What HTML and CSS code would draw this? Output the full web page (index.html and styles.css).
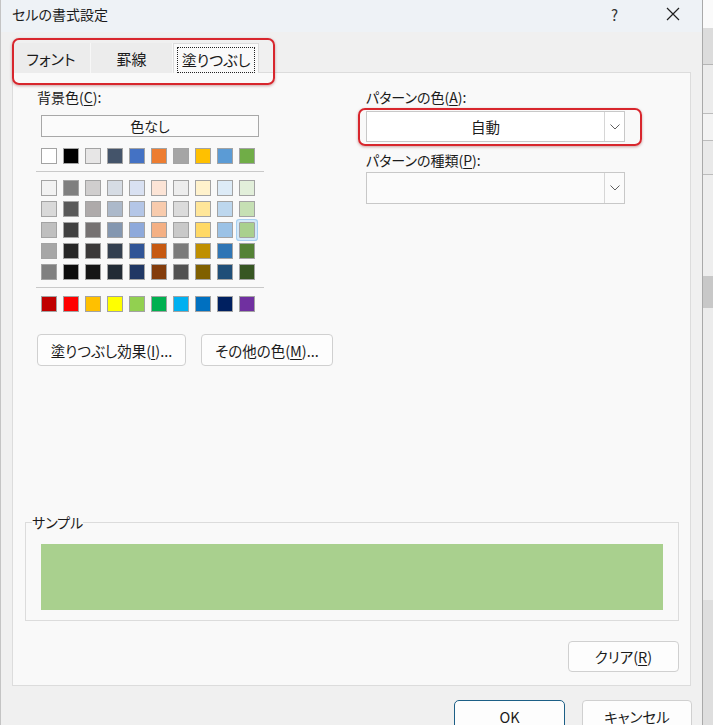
FILE: index.html
```html
<!DOCTYPE html>
<html lang="ja">
<head>
    <meta charset="UTF-8">
    <title>セルの書式設定</title>
    <link rel="stylesheet" href="styles.css">
</head>
<body>
    <div class="screen">
        <div class="dialog">
            <div class="titlebar">
                <span class="title">セルの書式設定</span>
                <span class="help">?</span>
                <span class="close">
                    <svg width="14" height="14" viewBox="0 0 14 14"><path d="M1 1 L13 13 M13 1 L1 13" stroke="#1f1f1f" stroke-width="1.2" fill="none"/></svg>
                </span>
            </div>

            <div class="tabs">
                <div class="tab">フォント</div>
                <div class="tab">罫線</div>
                <div class="tab active"><span class="focus">塗りつぶし</span></div>
                <span class="mark mark-tabs"></span>
            </div>

            <div class="panel">
                <div class="columns">
                    <div class="col-left">
                        <div class="label">背景色(<u>C</u>):</div>
                        <div class="palette">
                            <div class="no-color">色なし</div>

                            <div class="swatches theme">
                                <span class="swatch" style="background:#ffffff"></span>
                                <span class="swatch" style="background:#000000"></span>
                                <span class="swatch" style="background:#e7e6e6"></span>
                                <span class="swatch" style="background:#44546a"></span>
                                <span class="swatch" style="background:#4472c4"></span>
                                <span class="swatch" style="background:#ed7d31"></span>
                                <span class="swatch" style="background:#a5a5a5"></span>
                                <span class="swatch" style="background:#ffc000"></span>
                                <span class="swatch" style="background:#5b9bd5"></span>
                                <span class="swatch" style="background:#70ad47"></span>
                            </div>

                            <div class="divider"></div>

                            <div class="swatches shades">
                                <span class="swatch" style="background:#f2f2f2"></span>
                                <span class="swatch" style="background:#7f7f7f"></span>
                                <span class="swatch" style="background:#d0cece"></span>
                                <span class="swatch" style="background:#d6dce4"></span>
                                <span class="swatch" style="background:#d9e1f2"></span>
                                <span class="swatch" style="background:#fce4d6"></span>
                                <span class="swatch" style="background:#ededed"></span>
                                <span class="swatch" style="background:#fff2cc"></span>
                                <span class="swatch" style="background:#ddebf7"></span>
                                <span class="swatch" style="background:#e2efda"></span>

                                <span class="swatch" style="background:#d9d9d9"></span>
                                <span class="swatch" style="background:#595959"></span>
                                <span class="swatch" style="background:#aeaaaa"></span>
                                <span class="swatch" style="background:#acb9ca"></span>
                                <span class="swatch" style="background:#b4c6e7"></span>
                                <span class="swatch" style="background:#f8cbad"></span>
                                <span class="swatch" style="background:#dbdbdb"></span>
                                <span class="swatch" style="background:#ffe699"></span>
                                <span class="swatch" style="background:#bdd7ee"></span>
                                <span class="swatch" style="background:#c6e0b4"></span>

                                <span class="swatch" style="background:#bfbfbf"></span>
                                <span class="swatch" style="background:#404040"></span>
                                <span class="swatch" style="background:#757171"></span>
                                <span class="swatch" style="background:#8497b0"></span>
                                <span class="swatch" style="background:#8ea9db"></span>
                                <span class="swatch" style="background:#f4b084"></span>
                                <span class="swatch" style="background:#c9c9c9"></span>
                                <span class="swatch" style="background:#ffd966"></span>
                                <span class="swatch" style="background:#9bc2e6"></span>
                                <span class="swatch selected" style="background:#a9d08e"></span>

                                <span class="swatch" style="background:#a6a6a6"></span>
                                <span class="swatch" style="background:#262626"></span>
                                <span class="swatch" style="background:#3a3838"></span>
                                <span class="swatch" style="background:#333f4f"></span>
                                <span class="swatch" style="background:#305496"></span>
                                <span class="swatch" style="background:#c65911"></span>
                                <span class="swatch" style="background:#7b7b7b"></span>
                                <span class="swatch" style="background:#bf8f00"></span>
                                <span class="swatch" style="background:#2f75b5"></span>
                                <span class="swatch" style="background:#548235"></span>

                                <span class="swatch" style="background:#808080"></span>
                                <span class="swatch" style="background:#0d0d0d"></span>
                                <span class="swatch" style="background:#161616"></span>
                                <span class="swatch" style="background:#222b35"></span>
                                <span class="swatch" style="background:#203764"></span>
                                <span class="swatch" style="background:#833c0c"></span>
                                <span class="swatch" style="background:#525252"></span>
                                <span class="swatch" style="background:#806000"></span>
                                <span class="swatch" style="background:#1f4e78"></span>
                                <span class="swatch" style="background:#375623"></span>
                            </div>

                            <div class="divider"></div>

                            <div class="swatches standard">
                                <span class="swatch" style="background:#c00000"></span>
                                <span class="swatch" style="background:#ff0000"></span>
                                <span class="swatch" style="background:#ffc000"></span>
                                <span class="swatch" style="background:#ffff00"></span>
                                <span class="swatch" style="background:#92d050"></span>
                                <span class="swatch" style="background:#00b050"></span>
                                <span class="swatch" style="background:#00b0f0"></span>
                                <span class="swatch" style="background:#0070c0"></span>
                                <span class="swatch" style="background:#002060"></span>
                                <span class="swatch" style="background:#7030a0"></span>
                            </div>
                        </div>

                        <div class="effect-buttons">
                            <button class="btn btn-effect">塗りつぶし効果(<u>I</u>)...</button>
                            <button class="btn btn-more">その他の色(<u>M</u>)...</button>
                        </div>
                    </div>

                    <div class="col-right">
                        <div class="label">パターンの色(<u>A</u>):</div>
                        <div class="combo-wrap">
                            <div class="combo combo-white">
                                <span class="combo-value">自動</span>
                                <span class="combo-arrow">
                                    <svg width="10" height="6" viewBox="0 0 10 6"><path d="M0.5 0.5 L5 5 L9.5 0.5" stroke="#5f5f5f" stroke-width="1" fill="none"/></svg>
                                </span>
                            </div>
                            <span class="mark mark-combo"></span>
                        </div>
                        <div class="label label-pattern">パターンの種類(<u>P</u>):</div>
                        <div class="combo">
                            <span class="combo-value"></span>
                            <span class="combo-arrow">
                                <svg width="10" height="6" viewBox="0 0 10 6"><path d="M0.5 0.5 L5 5 L9.5 0.5" stroke="#5f5f5f" stroke-width="1" fill="none"/></svg>
                            </span>
                        </div>
                    </div>
                </div>

                <fieldset class="sample">
                    <legend>サンプル</legend>
                    <div class="sample-fill"></div>
                </fieldset>

                <div class="clear-row">
                    <button class="btn btn-clear">クリア(<u>R</u>)</button>
                </div>
            </div>

            <div class="footer">
                <button class="btn btn-ok">OK</button>
                <button class="btn btn-cancel">キャンセル</button>
            </div>
        </div>
        <div class="excel-edge"></div>
    </div>
</body>
</html>
```

FILE: styles.css
```css
:root {
    --text: #1b1b1b;
    --dialog-bg: #f0f0f0;
    --panel-bg: #f9f9f9;
    --panel-border: #dcdcdc;
    --mark-red: #d8262d;
    --swatch-border: #a3a3a3;
}

* {
    margin: 0;
    padding: 0;
    box-sizing: border-box;
}

body {
    font-family: "Noto Sans CJK JP", "Noto Sans", sans-serif;
    font-feature-settings: "palt";
    font-size: 14px;
    color: var(--text);
    background: #e6e6e6;
}

u {
    text-decoration: underline;
    text-underline-offset: 2px;
}

.screen {
    width: 713px;
    height: 725px;
    display: flex;
    overflow: hidden;
}

.dialog {
    width: 703px;
    flex-shrink: 0;
    background: var(--dialog-bg);
    border-left: 1px solid #c4c4c4;
    border-right: 1px solid #a9a9a9;
    display: flex;
    flex-direction: column;
}

/* title bar */
.titlebar {
    height: 32px;
    flex-shrink: 0;
    background: #eef2f6;
    display: flex;
    align-items: center;
    padding: 0 0 4px 11px;
}

.title {
    font-size: 14px;
    flex: 1;
}

.help {
    font-size: 15px;
    color: #333;
    margin-right: 48px;
}

.close {
    display: flex;
    margin-right: 22px;
}

/* tabs */
.tabs {
    position: relative;
    flex-shrink: 0;
    display: flex;
    padding: 11px 0 0 11px;
    margin-bottom: -1px;
    z-index: 1;
}

.tab {
    height: 30px;
    font-size: 15px;
    background: #ececec;
    border-right: 1px solid #f7f7f7;
    display: flex;
    align-items: center;
    justify-content: center;
}

.tab:nth-child(1) { width: 79px; }
.tab:nth-child(2) { width: 82px; }

.tab.active {
    width: 86px;
    background: var(--panel-bg);
    border: 1px solid var(--panel-border);
    border-bottom: none;
    padding-top: 2px;
}

.focus {
    display: flex;
    align-items: center;
    justify-content: center;
    width: 78px;
    height: 26px;
    border: 1px dotted #222;
}

.mark {
    position: absolute;
    border: 2px solid var(--mark-red);
    border-radius: 7px;
    box-shadow: 0 1px 3px rgba(120, 0, 0, 0.35);
    pointer-events: none;
}

.mark-tabs {
    left: 11px;
    top: 6px;
    width: 263px;
    height: 47px;
}

/* panel */
.panel {
    height: 614px;
    flex-shrink: 0;
    margin: 0 11px;
    background: var(--panel-bg);
    border: 1px solid var(--panel-border);
    display: flex;
    flex-direction: column;
    padding: 15px 0 13px 24px;
}

.columns {
    display: flex;
}

.col-left {
    width: 329px;
}

.label {
    height: 18px;
    line-height: 18px;
}

.palette {
    margin-left: 4px;
    margin-top: 9px;
}

.no-color {
    width: 218px;
    height: 22px;
    border: 1px solid #a8a8a8;
    background: #fbfbfb;
    text-align: center;
    line-height: 20px;
}

.swatches {
    display: grid;
    grid-template-columns: repeat(10, 16px);
    column-gap: 6px;
    row-gap: 5px;
}

.theme {
    margin-top: 11px;
}

.divider {
    height: 1px;
    width: 228px;
    margin: 7px 0 8px -5px;
    background: #c9c9c9;
}

.swatch {
    width: 16px;
    height: 16px;
    border: 1px solid var(--swatch-border);
}

.swatch.selected {
    box-shadow: 0 0 0 2px #d4e9f9, 0 0 0 3px #a6cff0;
    border-radius: 1px;
}

.effect-buttons {
    display: flex;
    gap: 15px;
    margin-top: 22px;
}

.btn {
    font-family: inherit;
    font-feature-settings: "palt";
    font-size: 14.5px;
    color: var(--text);
    background: #fdfdfd;
    border: 1px solid #d0d0d0;
    border-radius: 4px;
    height: 32px;
}

.btn-effect { width: 149px; }
.btn-more { width: 132px; }

/* pattern side */
.combo-wrap {
    position: relative;
    margin-top: 5px;
}

.combo {
    width: 259px;
    height: 32px;
    border: 1px solid #c8c8c8;
    background: #fbfbfb;
    display: flex;
}

.combo-white {
    height: 31px;
    background: #fff;
}

.combo-value {
    flex: 1;
    display: flex;
    align-items: center;
    justify-content: center;
    font-size: 14.5px;
}

.combo-arrow {
    width: 20px;
    border-left: 1px solid #d6d6d6;
    display: flex;
    align-items: center;
    justify-content: center;
}

.mark-combo {
    left: -8px;
    top: -3px;
    width: 284px;
    height: 38px;
}

.label-pattern {
    margin-top: 9px;
    margin-bottom: 3px;
}

/* sample */
.sample {
    margin-top: auto;
    width: 654px;
    border: 1px solid #dcdcdc;
    padding: 13px 15px 10px;
    margin-left: -12px;
}

.sample legend {
    margin-left: -9px;
    line-height: 18px;
    font-size: 14px;
}

.sample-fill {
    height: 66px;
    background: #a9d08e;
}

.clear-row {
    display: flex;
    justify-content: flex-end;
    padding-right: 11px;
    margin-top: 20px;
}

.btn-clear {
    width: 111px;
    height: 31px;
}

/* footer */
.footer {
    display: flex;
    justify-content: flex-end;
    gap: 17px;
    padding: 14px 10px 0 0;
}

.btn-ok {
    width: 111px;
    border: 1px solid #1c5f86;
    border-radius: 5px;
}

.btn-cancel {
    width: 110px;
}

/* strip of the sheet behind the dialog */
.excel-edge {
    flex: 1;
    background: linear-gradient(to bottom,
        #fafafa 0, #fafafa 28px,
        #dcdcdc 28px, #dcdcdc 64px,
        #b5b5b5 64px, #b5b5b5 65px,
        #ececec 65px, #ececec 113px,
        #bcbcbc 113px, #bcbcbc 114px,
        #f3f3f3 114px, #f3f3f3 140px,
        #bcbcbc 140px, #bcbcbc 141px,
        #e9e9e9 141px, #e9e9e9 174px,
        #bcbcbc 174px, #bcbcbc 175px,
        #eeeeee 175px, #eeeeee 276px,
        #c8c8c8 276px, #c8c8c8 308px,
        #ececec 308px, #ececec 600px,
        #dedede 600px);
}
```
